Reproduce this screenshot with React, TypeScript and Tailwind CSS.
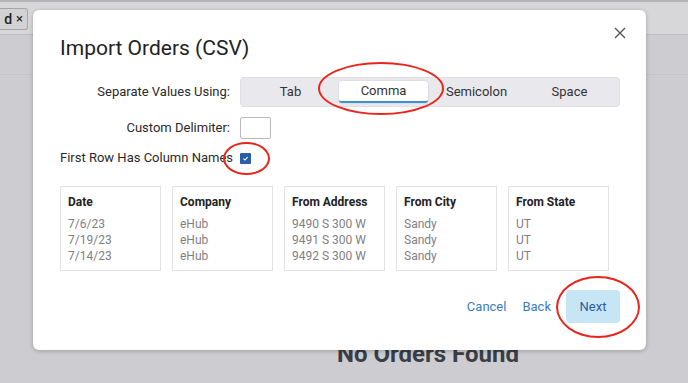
import React from 'react';

const columns = [
  { name: 'Date', values: ['7/6/23', '7/19/23', '7/14/23'] },
  { name: 'Company', values: ['eHub', 'eHub', 'eHub'] },
  { name: 'From Address', values: ['9490 S 300 W', '9491 S 300 W', '9492 S 300 W'] },
  { name: 'From City', values: ['Sandy', 'Sandy', 'Sandy'] },
  { name: 'From State', values: ['UT', 'UT', 'UT'] },
];

const options = ['Tab', 'Comma', 'Semicolon', 'Space'];

const App: React.FC = () => {
  return (
    <div className="relative w-[688px] h-[383px] overflow-hidden bg-[#cdcdd1] font-['Roboto',sans-serif]">
      {/* Background app */}
      <div className="h-[2px] bg-[#b4b4b8]" />
      <div className="h-[33px] bg-[#d7d7da] border-b border-[#bdbdc1] flex items-start pt-[6px]">
        <div className="h-[22px] w-[28px] flex items-center justify-end gap-[4px] pr-[4px] bg-[#d2d2d5] border border-l-0 border-[#a6a6aa] rounded-r-[3px] text-[14px] text-[#222]">
          <span className="font-medium">d</span>
          <span className="text-[13px]">×</span>
        </div>
      </div>
      <div className="h-[40px] border-b border-[#c4c4c8]" />
      <div className="pt-[265px] pl-[337px]">
        <h2 className="text-[24px] leading-[28px] font-bold text-[#3a3d44]">No Orders Found</h2>
      </div>

      {/* Modal */}
      <div className="absolute left-[33px] top-[10px] w-[613px] h-[340px] bg-white rounded-[6px] shadow-[0_1px_4px_rgba(0,0,0,0.25)] pl-[27px] pr-[26px] pt-[24px]">
        <button className="absolute right-[20px] top-[17px] w-[12px] h-[12px] text-[#555]">
          <svg viewBox="0 0 12 12" className="w-[12px] h-[12px]" fill="none" stroke="currentColor" strokeWidth="1.4">
            <path d="M1 1 L11 11 M11 1 L1 11" />
          </svg>
        </button>
        <h1 className="text-[21px] leading-[28px] text-[#222]">Import Orders (CSV)</h1>

        <div className="mt-[15px] grid grid-cols-[170px_380px] gap-x-[10px] items-center text-[13px] text-[#2a2a2a]">
          <label className="text-right">Separate Values Using:</label>
          <div className="h-[30px] grid grid-cols-4 p-[3px] bg-[#e8e8ed] border border-[#dedee3] rounded-[4px]">
            {options.map((o) =>
              o === 'Comma' ? (
                <div
                  key={o}
                  className="mx-[2px] flex items-center justify-center bg-white rounded-[3px] border-b-2 border-[#3d8fd6] shadow-[0_0_2px_rgba(0,0,0,0.15)] text-[#333]"
                >
                  {o}
                </div>
              ) : (
                <div key={o} className="flex items-center justify-center text-[#333]">
                  {o}
                </div>
              )
            )}
          </div>

          <label className="mt-[10px] text-right">Custom Delimiter:</label>
          <div className="mt-[10px]">
            <input className="block w-[31px] h-[22px] border border-[#b9b9bd] rounded-[2px] outline-none" />
          </div>

          <label className="mt-[8px] h-[22px] flex items-center whitespace-nowrap">First Row Has Column Names</label>
          <div className="mt-[8px] h-[22px] flex items-center">
            <span className="w-[11px] h-[11px] bg-[#2b5ea7] rounded-[1px] flex items-center justify-center">
              <svg viewBox="0 0 10 10" className="w-[7px] h-[7px]" fill="none" stroke="white" strokeWidth="1.6">
                <path d="M2 5.2 L4.2 7.2 L8 3" />
              </svg>
            </span>
          </div>
        </div>

        <div className="mt-[17px] flex gap-[11px]">
          {columns.map((c) => (
            <div key={c.name} className="w-[101px] h-[85px] border border-[#e2e2e6] pt-[7px] pl-[7px]">
              <div className="text-[12px] leading-[16px] font-bold text-[#222]">{c.name}</div>
              <div className="mt-[6px] text-[12px] leading-[16px] text-[#808084]">
                {c.values.map((v, i) => (
                  <div key={i}>{v}</div>
                ))}
              </div>
            </div>
          ))}
        </div>

        <div className="mt-[19px] flex justify-end items-center text-[13px]">
          <button className="text-[#3a7cc4]">Cancel</button>
          <button className="ml-[16px] text-[#3a7cc4]">Back</button>
          <button className="ml-[15px] w-[54px] h-[33px] bg-[#c6e6f5] rounded-[4px] text-[#2d5d9c]">Next</button>
        </div>
      </div>

      {/* Annotations */}
      <div className="absolute left-[318px] top-[62px] w-[126px] h-[53px] border-2 border-[#e8261d] rounded-[50%]" />
      <div className="absolute left-[223px] top-[142px] w-[47px] h-[33px] border-2 border-[#e8261d] rounded-[50%]" />
      <div className="absolute left-[556px] top-[276px] w-[84px] h-[62px] border-2 border-[#e8261d] rounded-[50%]" />
    </div>
  );
};

export default App;
